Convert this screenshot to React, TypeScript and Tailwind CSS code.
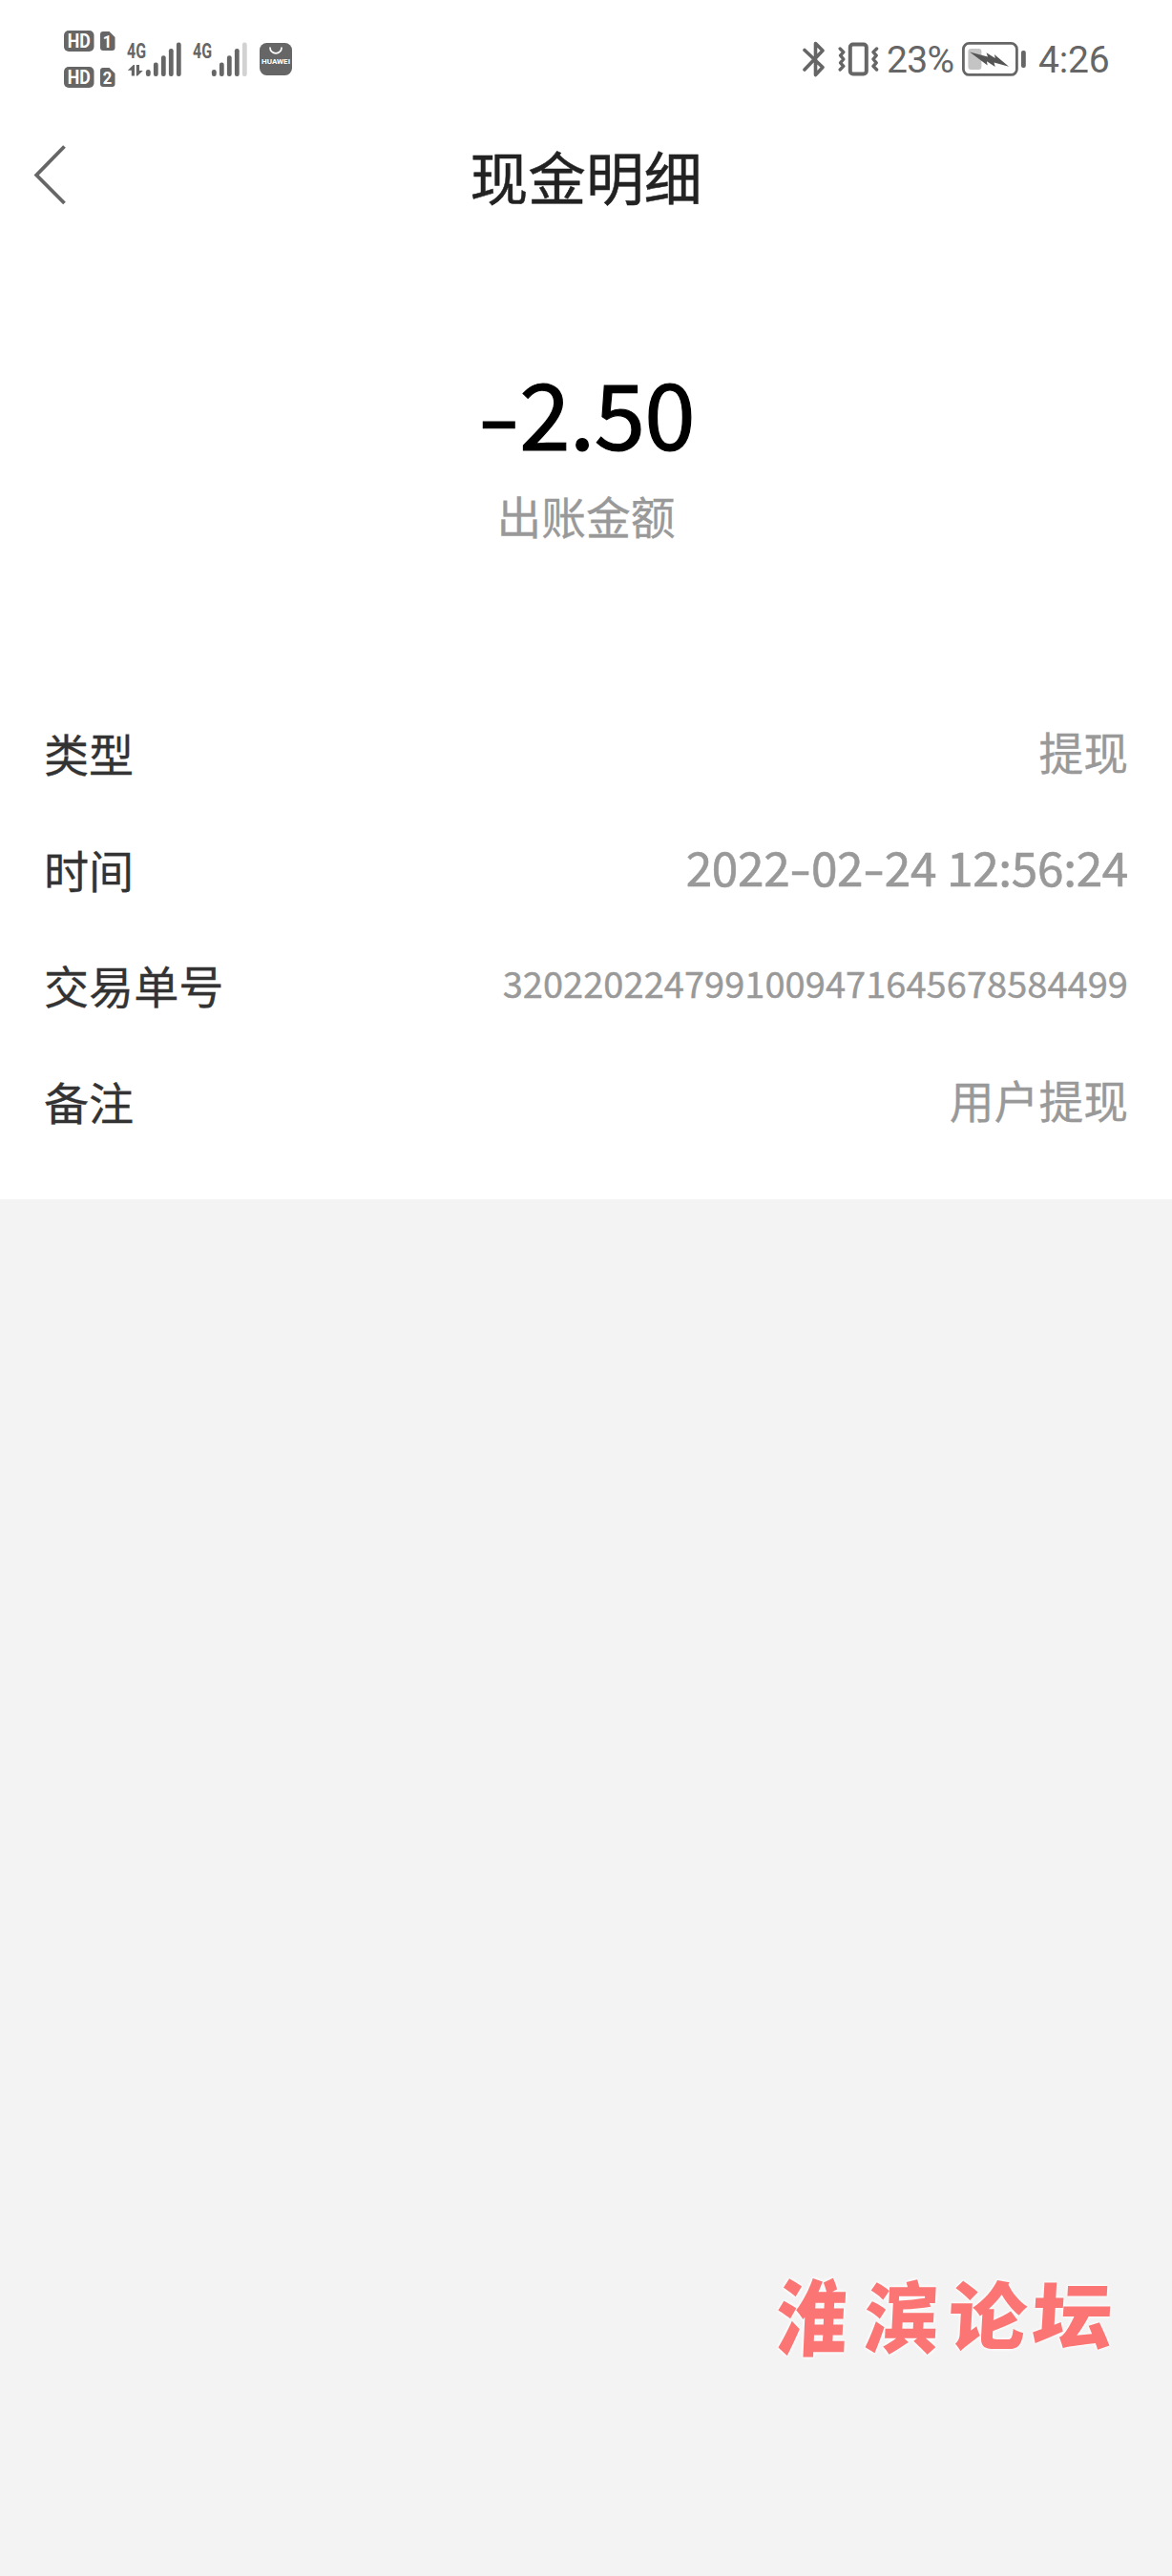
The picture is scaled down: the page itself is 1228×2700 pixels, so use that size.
import { clsx } from 'clsx'

// ── Types ─────────────────────────────────────────────────────────────────────
interface DetailItem {
  label: string
  value: string
  kind: 'text' | 'date' | 'serial'
}

// ── Data ──────────────────────────────────────────────────────────────────────
const details: DetailItem[] = [
  { label: '类型', value: '提现', kind: 'text' },
  { label: '时间', value: '2022-02-24 12:56:24', kind: 'date' },
  { label: '交易单号', value: '3202202247991009471645678584499', kind: 'serial' },
  { label: '备注', value: '用户提现', kind: 'text' },
]

const valueStyles = {
  text: '-mt-2 text-[46.8px] [-webkit-text-stroke:0.3px_#999]',
  date: '-mt-3 text-[49.5px] tracking-[-0.3px] [-webkit-text-stroke:0.6px_#999]',
  serial: '-mt-[10px] text-[38px] tracking-[0.04px] [-webkit-text-stroke:0.4px_#999]',
}

// ── Status bar icons ──────────────────────────────────────────────────────────
function HdBadge({ sim }: { sim: string }) {
  return (
    <svg width="54" height="22" viewBox="0 0 54 22" className="block">
      <rect width="31.5" height="22" rx="5" fill="#666" />
      <text x="15.8" y="17.8" textAnchor="middle" fontSize="19.5" fontWeight="700" fill="#fff" textLength="24" lengthAdjust="spacingAndGlyphs">
        HD
      </text>
      <path d="M41 1h6.5L53.5 7v11a3 3 0 0 1-3 3H41a3 3 0 0 1-3-3V4a3 3 0 0 1 3-3z" fill="#666" />
      <text x="45.5" y="17.8" textAnchor="middle" fontSize="19" fontWeight="700" fill="#fff" textLength="9.5" lengthAdjust="spacingAndGlyphs">
        {sim}
      </text>
    </svg>
  )
}

function Signal({ level, data }: { level: number; data?: boolean }) {
  const tops = [31, 23.5, 16.2, 9, 2.6]
  return (
    <svg width="58" height="40" viewBox="0 0 58 40" className="block">
      <text x="0" y="18.5" fontSize="22" fontWeight="700" fill="#666" textLength="20" lengthAdjust="spacingAndGlyphs">
        4G
      </text>
      {data && (
        <g fill="#666">
          <path d="M0.8 31.8L6.8 26h1.2v11.5H4.8v-5.7z" />
          <path d="M16.8 32l-5.6 5.5H9.8V26H13v6z" />
        </g>
      )}
      {tops.map((top, i) => (
        <rect key={top} x={19.9 + i * 8} y={top} width="4.8" height={38 - top} rx="2.2" fill={i < level ? '#666' : '#d2d2d2'} />
      ))}
    </svg>
  )
}

function HuaweiIcon() {
  return (
    <svg width="34" height="34" viewBox="0 0 34 34" className="block">
      <rect width="34" height="34" rx="7.5" fill="#666" />
      <path d="M11 5.2a6 5.6 0 0 0 12 0" fill="none" stroke="#fff" strokeWidth="1.7" strokeLinecap="round" />
      <text x="17" y="22.3" textAnchor="middle" fontSize="7.6" fontWeight="700" fill="#fff" textLength="30" lengthAdjust="spacingAndGlyphs">
        HUAWEI
      </text>
    </svg>
  )
}

function BluetoothIcon() {
  return (
    <svg width="24" height="38" viewBox="0 0 24 38" className="block" fill="none" stroke="#666" strokeWidth="3.6" strokeLinecap="round" strokeLinejoin="round">
      <path d="M2 9.5L21 27.5 13.5 35.5V2.5L21 10 2 30" />
    </svg>
  )
}

function VibrateIcon() {
  return (
    <svg width="43" height="36" viewBox="0 0 43 36" className="block" fill="none" stroke="#666" strokeLinecap="round" strokeLinejoin="round">
      <rect x="12.8" y="2.5" width="17" height="31" rx="3" strokeWidth="4" />
      <path d="M2.2 7l3.6 3.6-3.2 3.6 3.2 3.8-3.2 3.8 3.2 3.6L2.2 29M40.6 7L37 10.6l3.2 3.6L37 18l3.2 3.8-3.2 3.6 3.6 3.6" strokeWidth="3.4" />
    </svg>
  )
}

function BatteryIcon() {
  return (
    <svg width="68" height="36" viewBox="0 0 68 36" className="block">
      <rect x="1.4" y="1.4" width="56" height="33" rx="6" fill="none" stroke="#666" strokeWidth="2.8" />
      <rect x="6.4" y="7" width="14" height="22" rx="3" fill="#c4c4c4" />
      <path d="M8 10.5l19 5-1.5-4.2 9.3 5.8-1-4.2L49 25.7l-15.5-4.2 1.2 4.4-8.8-5.6.8 4.1z" fill="#555" />
      <rect x="62" y="9" width="4.8" height="18" rx="2" fill="#666" />
    </svg>
  )
}

// ── Status bar ────────────────────────────────────────────────────────────────
function StatusBar() {
  return (
    <div className="flex h-[124px] items-center justify-between px-[67px] font-['Roboto','Noto_Sans_CJK_SC',sans-serif]">
      <div className="flex items-center">
        <div className="flex flex-col gap-4">
          <HdBadge sim="1" />
          <HdBadge sim="2" />
        </div>
        <div className="ml-3">
          <Signal level={5} data />
        </div>
        <div className="ml-[11px]">
          <Signal level={4} />
        </div>
        <div className="ml-3">
          <HuaweiIcon />
        </div>
      </div>
      <div className="flex items-center text-[#666]">
        <BluetoothIcon />
        <div className="ml-[13px]">
          <VibrateIcon />
        </div>
        <span className="mt-[3px] ml-2 w-[73px] whitespace-nowrap text-[39px] leading-none tracking-[-0.7px]">23%</span>
        <div className="ml-[6px]">
          <BatteryIcon />
        </div>
        <span className="mt-[3px] ml-3 w-[73px] whitespace-nowrap text-[39px] leading-none tracking-[-0.2px]">4:26</span>
      </div>
    </div>
  )
}

// ── Numbers with a widened dash ───────────────────────────────────────────────
function Figures({ text, dashClass }: { text: string; dashClass: string }) {
  return (
    <>
      {text.split('').map((char, i) =>
        char === '-' ? (
          <span key={i} className={clsx('inline-block text-center', dashClass)}>
            <span className="inline-block scale-x-[1.32]">-</span>
          </span>
        ) : (
          char
        ),
      )}
    </>
  )
}

// ── Detail row ────────────────────────────────────────────────────────────────
function DetailRow({ item }: { item: DetailItem }) {
  return (
    <div className="flex h-[121.5px] items-center justify-between">
      <span className="-mt-[6px] text-[47.1px] leading-none text-[#333] [-webkit-text-stroke:0.3px_#333]">{item.label}</span>
      <span className={clsx('whitespace-pre leading-none text-[#999]', valueStyles[item.kind])}>
        <Figures text={item.value} dashClass="w-[22.5px]" />
      </span>
    </div>
  )
}

// ── Forum watermark ───────────────────────────────────────────────────────────
function Watermark() {
  return (
    <div className="flex items-center justify-end pr-[62px] font-black leading-none text-[#fb7575] [text-shadow:0_0_4px_#fff,0_0_4px_#fff]">
      <span className="w-[92px] -skew-x-3 scale-y-[1.18] text-[74px]">淮</span>
      <span className="w-[88px] -skew-x-3 scale-y-105 text-[78px]">滨</span>
      <span className="w-[88px] -skew-x-3 scale-y-95 text-[82px]">论</span>
      <span className="w-[84px] -skew-x-3 scale-y-90 text-[84px]">坛</span>
    </div>
  )
}

// ── Page ──────────────────────────────────────────────────────────────────────
export default function App() {
  return (
    <div className="flex h-[2700px] w-[1228px] flex-col justify-between overflow-hidden bg-[#f3f3f3] font-['Noto_Sans_CJK_SC',sans-serif]">
      <div className="h-[1257px] bg-white">
        <StatusBar />

        {/* ── Title bar ── */}
        <div className="grid h-[120px] grid-cols-[200px_1fr_200px] items-center">
          <svg width="34" height="64" viewBox="0 0 34 64" className="ml-[35px] block" fill="none" stroke="#666" strokeWidth="3.8">
            <path d="M32.5 1.5L3.2 31.5l29.3 29.5" />
          </svg>
          <h1 className="text-center text-[60.8px] leading-none text-[#222] [-webkit-text-stroke:0.5px_#222]">现金明细</h1>
        </div>

        {/* ── Amount ── */}
        <div className="flex h-[487px] flex-col items-center pt-[139px]">
          <p className="text-[96px] leading-[96px] tracking-[-0.8px] text-black [-webkit-text-stroke:1.2px_#000]">
            <Figures text="-2.50" dashClass="w-[44px]" />
          </p>
          <p className="mt-[38px] text-[46.8px] leading-none text-[#999] [-webkit-text-stroke:0.3px_#999]">出账金额</p>
        </div>

        {/* ── Details ── */}
        <div className="px-[46px]">
          {details.map((item) => (
            <DetailRow key={item.label} item={item} />
          ))}
        </div>
      </div>

      <div className="pb-[234px]">
        <Watermark />
      </div>
    </div>
  )
}
